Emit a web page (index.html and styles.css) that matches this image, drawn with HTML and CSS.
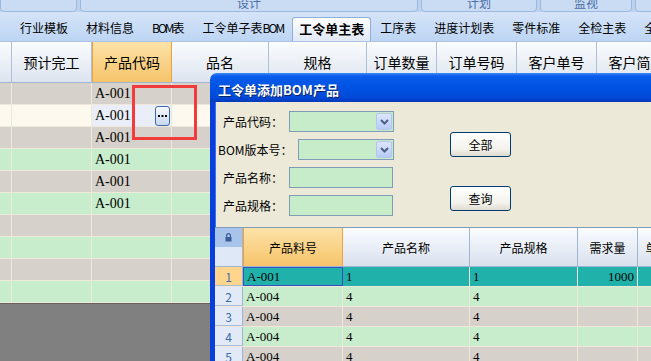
FILE: index.html
```html
<!DOCTYPE html>
<html lang="zh">
<head>
    <meta charset="UTF-8">
    <title>工令单主表</title>
    <link rel="stylesheet" href="styles.css">
</head>
<body>
    <div class="ribbon">
        <div class="group g1"></div>
        <div class="group g2">设计</div>
        <div class="group g3">计划</div>
        <div class="group g4">监视</div>
        <div class="group g5"></div>
    </div>

    <ul class="tabs">
        <li>行业模板</li>
        <li>材料信息</li>
        <li><span class="en">BOM</span>表</li>
        <li>工令单子表<span class="en">BOM</span></li>
        <li class="active">工令单主表</li>
        <li>工序表</li>
        <li>进度计划表</li>
        <li>零件标准</li>
        <li>全检主表</li>
        <li>全检子表</li>
    </ul>

    <!-- 工令单主表 -->
    <div class="sheet">
        <div class="row head">
            <div class="cell"></div>
            <div class="cell">预计完工</div>
            <div class="cell sel">产品代码</div>
            <div class="cell">品名</div>
            <div class="cell">规格</div>
            <div class="cell">订单数量</div>
            <div class="cell">订单号码</div>
            <div class="cell">客户单号</div>
            <div class="cell">客户简称</div>
        </div>
        <div class="row gray">
            <div class="cell"></div><div class="cell"></div><div class="cell">A-001</div><div class="cell"></div><div class="cell"></div><div class="cell"></div><div class="cell"></div><div class="cell"></div><div class="cell"></div>
        </div>
        <div class="row cur">
            <div class="cell"></div><div class="cell"></div>
            <div class="cell edit">A-001<span class="more"><svg width="9" height="2" viewBox="0 0 9 2"><rect x="0" y="0" width="2" height="2"/><rect x="3.5" y="0" width="2" height="2"/><rect x="7" y="0" width="2" height="2"/></svg></span></div>
            <div class="cell"></div><div class="cell"></div><div class="cell"></div><div class="cell"></div><div class="cell"></div><div class="cell"></div>
        </div>
        <div class="row gray">
            <div class="cell"></div><div class="cell"></div><div class="cell">A-001</div><div class="cell"></div><div class="cell"></div><div class="cell"></div><div class="cell"></div><div class="cell"></div><div class="cell"></div>
        </div>
        <div class="row green">
            <div class="cell"></div><div class="cell"></div><div class="cell">A-001</div><div class="cell"></div><div class="cell"></div><div class="cell"></div><div class="cell"></div><div class="cell"></div><div class="cell"></div>
        </div>
        <div class="row gray">
            <div class="cell"></div><div class="cell"></div><div class="cell">A-001</div><div class="cell"></div><div class="cell"></div><div class="cell"></div><div class="cell"></div><div class="cell"></div><div class="cell"></div>
        </div>
        <div class="row green">
            <div class="cell"></div><div class="cell"></div><div class="cell">A-001</div><div class="cell"></div><div class="cell"></div><div class="cell"></div><div class="cell"></div><div class="cell"></div><div class="cell"></div>
        </div>
        <div class="row gray">
            <div class="cell"></div><div class="cell"></div><div class="cell"></div><div class="cell"></div><div class="cell"></div><div class="cell"></div><div class="cell"></div><div class="cell"></div><div class="cell"></div>
        </div>
        <div class="row green">
            <div class="cell"></div><div class="cell"></div><div class="cell"></div><div class="cell"></div><div class="cell"></div><div class="cell"></div><div class="cell"></div><div class="cell"></div><div class="cell"></div>
        </div>
        <div class="row gray">
            <div class="cell"></div><div class="cell"></div><div class="cell"></div><div class="cell"></div><div class="cell"></div><div class="cell"></div><div class="cell"></div><div class="cell"></div><div class="cell"></div>
        </div>
        <div class="row green">
            <div class="cell"></div><div class="cell"></div><div class="cell"></div><div class="cell"></div><div class="cell"></div><div class="cell"></div><div class="cell"></div><div class="cell"></div><div class="cell"></div>
        </div>
    </div>

    <!-- 标注框 -->
    <div class="mark"></div>

    <!-- 添加BOM产品 弹窗 -->
    <div class="dialog">
        <div class="title">工令单添加BOM产品</div>
        <div class="body">
            <div class="query">
                <div class="fields">
                    <div class="field">
                        <label>产品代码：</label>
                        <div class="combo"><span class="drop"><svg width="9" height="6" viewBox="0 0 9 6"><path d="M1 1l3.5 3.5L8 1" fill="none" stroke="#4d6185" stroke-width="2"/></svg></span></div>
                    </div>
                    <div class="field ver">
                        <label>BOM版本号：</label>
                        <div class="combo"><span class="drop"><svg width="9" height="6" viewBox="0 0 9 6"><path d="M1 1l3.5 3.5L8 1" fill="none" stroke="#4d6185" stroke-width="2"/></svg></span></div>
                    </div>
                    <div class="field">
                        <label>产品名称：</label>
                        <div class="input"></div>
                    </div>
                    <div class="field">
                        <label>产品规格：</label>
                        <div class="input"></div>
                    </div>
                </div>
                <div class="buttons">
                    <button>全部</button>
                    <button>查询</button>
                </div>
            </div>

            <div class="list">
                <div class="row head">
                    <div class="cell lock"><span class="lock-top"><svg width="7" height="9" viewBox="0 0 7 9"><path d="M1.6 4.2V2.6a1.9 1.9 0 0 1 3.8 0v1.6" fill="none" stroke="#3b5c96" stroke-width="1.2"/><rect x="0.5" y="4" width="6" height="4.5" fill="#3b5c96"/></svg></span></div>
                    <div class="cell sel">产品料号</div>
                    <div class="cell">产品名称</div>
                    <div class="cell">产品规格</div>
                    <div class="cell">需求量</div>
                    <div class="cell">单位</div>
                </div>
                <div class="row teal">
                    <div class="cell no cur-no">1</div>
                    <div class="cell focus">A-001</div>
                    <div class="cell">1</div>
                    <div class="cell">1</div>
                    <div class="cell num">1000</div>
                    <div class="cell"></div>
                </div>
                <div class="row green">
                    <div class="cell no">2</div><div class="cell">A-004</div><div class="cell">4</div><div class="cell">4</div><div class="cell"></div><div class="cell"></div>
                </div>
                <div class="row gray">
                    <div class="cell no">3</div><div class="cell">A-004</div><div class="cell">4</div><div class="cell">4</div><div class="cell"></div><div class="cell"></div>
                </div>
                <div class="row green">
                    <div class="cell no">4</div><div class="cell">A-004</div><div class="cell">4</div><div class="cell">4</div><div class="cell"></div><div class="cell"></div>
                </div>
                <div class="row gray">
                    <div class="cell no">5</div><div class="cell">A-004</div><div class="cell">4</div><div class="cell">4</div><div class="cell"></div><div class="cell"></div>
                </div>
            </div>
        </div>
    </div>
</body>
</html>
```

FILE: styles.css
```css
* {
    box-sizing: border-box;
}
body {
    margin: 0;
    width: 651px;
    height: 361px;
    overflow: hidden;
    position: relative;
    background: #808080;
    font-family: "Noto Sans CJK SC", sans-serif;
    font-size: 12px;
    color: #000;
}

/* 顶部功能区 */
.ribbon {
    height: 12px;
    display: flex;
    overflow: hidden;
    background: #bcd2ee;
}
.ribbon .group {
    flex: none;
    height: 20px;
    margin-top: -8px;
    margin-right: 3px;
    padding-top: 2px;
    border: 1px solid #9cb8dc;
    border-radius: 0 0 4px 4px;
    background: #cadcf3;
    color: #4a6ea8;
    text-align: center;
    line-height: 16px;
}
.ribbon .g1 { width: 77px; }
.ribbon .g2 { width: 338px; }
.ribbon .g3 { width: 116px; }
.ribbon .g4 { width: 92px; }
.ribbon .g5 { width: 60px; }

/* 标签栏 */
.tabs {
    list-style: none;
    margin: 0;
    padding: 0 0 0 11px;
    height: 30px;
    display: flex;
    align-items: flex-end;
    white-space: nowrap;
    background: linear-gradient(#d5e4f8, #bdd5f4);
    border-bottom: 1px solid #aac3e3;
}
.tabs li {
    flex: none;
    height: 24px;
    line-height: 22px;
    padding: 0 9px;
}
.tabs .en {
    letter-spacing: -2px;
}
.tabs li.active {
    padding: 0 6px;
    font-size: 13px;
    font-weight: bold;
    background: linear-gradient(#ffffff, #e0e8f4);
    border: 1px solid #8eaedb;
    border-bottom: none;
    border-radius: 3px 3px 0 0;
}

/* 主表格 */
.sheet {
    border-bottom: 1px solid #67625b;
}
.sheet .row {
    display: flex;
    height: 22px;
    border-bottom: 1px solid #efe9dc;
}
.sheet .cell {
    flex: none;
    display: flex;
    align-items: center;
    padding-left: 3px;
    border-right: 1px solid #efe9dc;
    font-family: "Liberation Serif", "Noto Sans CJK SC", serif;
    font-size: 14px;
}
.sheet .cell:nth-child(1) { width: 12px; }
.sheet .cell:nth-child(2) { width: 80px; }
.sheet .cell:nth-child(3) { width: 80px; }
.sheet .cell:nth-child(4) { width: 97px; }
.sheet .cell:nth-child(5) { width: 98px; }
.sheet .cell:nth-child(6) { width: 70px; }
.sheet .cell:nth-child(7) { width: 80px; }
.sheet .cell:nth-child(8) { width: 80px; }
.sheet .cell:nth-child(9) { width: 80px; }
.sheet .row.head {
    height: 41px;
    background: linear-gradient(#fafcfe, #dde4ef);
    border-bottom: 1px solid #9fb5d2;
}
.sheet .head .cell {
    justify-content: center;
    padding-left: 0;
    border-right-color: #aebfd7;
    font-family: "Noto Sans CJK SC", sans-serif;
}
.sheet .head .cell.sel {
    background: linear-gradient(#fde2a8, #f6c46a);
    border-left: 1px solid #f0a23c;
    border-right: 1px solid #f0a23c;
}
.row.gray { background: #d6d1ca; }
.row.green { background: #c7edcc; }
.row.cur { background: #fdf9ef; }
.sheet .cell.edit {
    justify-content: space-between;
    background: #eaeef8;
    padding-right: 1px;
}
.more {
    width: 15px;
    height: 20px;
    display: flex;
    align-items: center;
    justify-content: center;
    border: 1px solid #3c6ab0;
    border-radius: 3px;
    background: linear-gradient(#f7f9fd, #c9d7ee);
}

/* 标注框 */
.mark {
    position: absolute;
    left: 132px;
    top: 85px;
    width: 65px;
    height: 55px;
    border: 3px solid #f23c3c;
}

/* 弹窗 */
.dialog {
    position: absolute;
    left: 210px;
    top: 73px;
    width: 460px;
    height: 300px;
}
.dialog .title {
    height: 29px;
    padding: 4px 0 0 8px;
    line-height: 26px;
    border-radius: 7px 0 0 0;
    background: linear-gradient(#3d8cf7 0, #0a5ceb 3px, #0054e3 45%, #0049d8 85%, #0039b8 100%);
    color: #fff;
    font-size: 13px;
    font-weight: bold;
    text-shadow: 1px 1px 0 #0a246a;
}
.dialog .body {
    height: 271px;
    background: #ece9d8;
    border-left: 5px solid #0a3ed8;
    box-shadow: inset 1px 0 0 #3a6ff0;
}
.query {
    height: 125px;
    display: flex;
    padding-top: 9px;
}
.field {
    display: flex;
    height: 21px;
    margin-bottom: 7px;
}
.field label {
    width: 74px;
    padding-left: 8px;
    line-height: 21px;
    white-space: nowrap;
}
.field.ver label {
    width: 83px;
    padding-left: 3px;
}
.combo,
.input {
    position: relative;
    width: 104px;
    border: 1px solid #7f9db9;
    background: #c7ecca;
}
.combo {
    width: 105px;
    display: flex;
    justify-content: flex-end;
    padding: 1px;
}
.field.ver .combo {
    width: 96px;
}
.drop {
    width: 16px;
    display: flex;
    align-items: center;
    justify-content: center;
    border: 1px solid #b4c6ee;
    border-radius: 2px;
    background: linear-gradient(#dde7fd, #b7cbf6);
}
.buttons {
    margin-left: 56px;
    padding-top: 21px;
    display: flex;
    flex-direction: column;
}
.buttons button {
    flex: none;
    width: 61px;
    height: 25px;
    padding: 0;
    border: 1px solid #003c74;
    border-radius: 3px;
    background: linear-gradient(#ffffff, #f3f2ec 70%, #dedbcf);
    font-family: "Noto Sans CJK SC", sans-serif;
    font-size: 12px;
    color: #000;
}
.buttons button + button {
    margin-top: 29px;
}

/* 弹窗内表格 */
.list {
    border-top: 1px solid #7f9db9;
}
.list .row {
    display: flex;
    height: 20px;
    border-bottom: 1px solid #efe8d8;
}
.list .cell {
    flex: none;
    display: flex;
    align-items: center;
    padding-left: 3px;
    border-right: 1px solid #efe8d8;
    font-family: "Liberation Serif", "Noto Sans CJK SC", serif;
    font-size: 13px;
}
.list .cell:nth-child(1) { width: 28px; }
.list .cell:nth-child(2) { width: 100px; }
.list .cell:nth-child(3) { width: 127px; }
.list .cell:nth-child(4) { width: 108px; }
.list .cell:nth-child(5) { width: 60px; }
.list .cell:nth-child(6) { width: 40px; }
.list .row.head {
    height: 39px;
    background: linear-gradient(#fafcff, #d9e1ee);
    border-bottom: 1px solid #9fb5d2;
}
.list .head .cell {
    justify-content: center;
    padding-left: 0;
    border-right-color: #9fb5d2;
    font-family: "Noto Sans CJK SC", sans-serif;
    font-size: 12px;
}
.list .head .cell.sel {
    background: linear-gradient(#fde2a8, #f6c46a);
    border-right: 1px solid #f0a23c;
    border-left: 1px solid #f0a23c;
}
.list .head .cell.lock {
    flex-direction: column;
    justify-content: flex-start;
    background: #dfe8f6;
}
.lock-top {
    width: 100%;
    height: 19px;
    display: flex;
    align-items: center;
    justify-content: center;
    background: #a9c4eb;
}
.list .cell.no {
    justify-content: center;
    padding-left: 0;
    background: #e2eaf7;
    border-right: 1px solid #9db4d4;
    border-bottom: 1px solid #a9bdd9;
    color: #3c6bb0;
    font-family: "Noto Sans CJK SC", sans-serif;
    font-size: 12px;
}
.list .cell.cur-no {
    background: #fdd58c;
}
.row.teal { background: #20b2aa; }
.list .cell.focus {
    border: 1px solid #3b50c0;
}
.list .cell.num {
    justify-content: flex-end;
    padding-right: 3px;
}
```
